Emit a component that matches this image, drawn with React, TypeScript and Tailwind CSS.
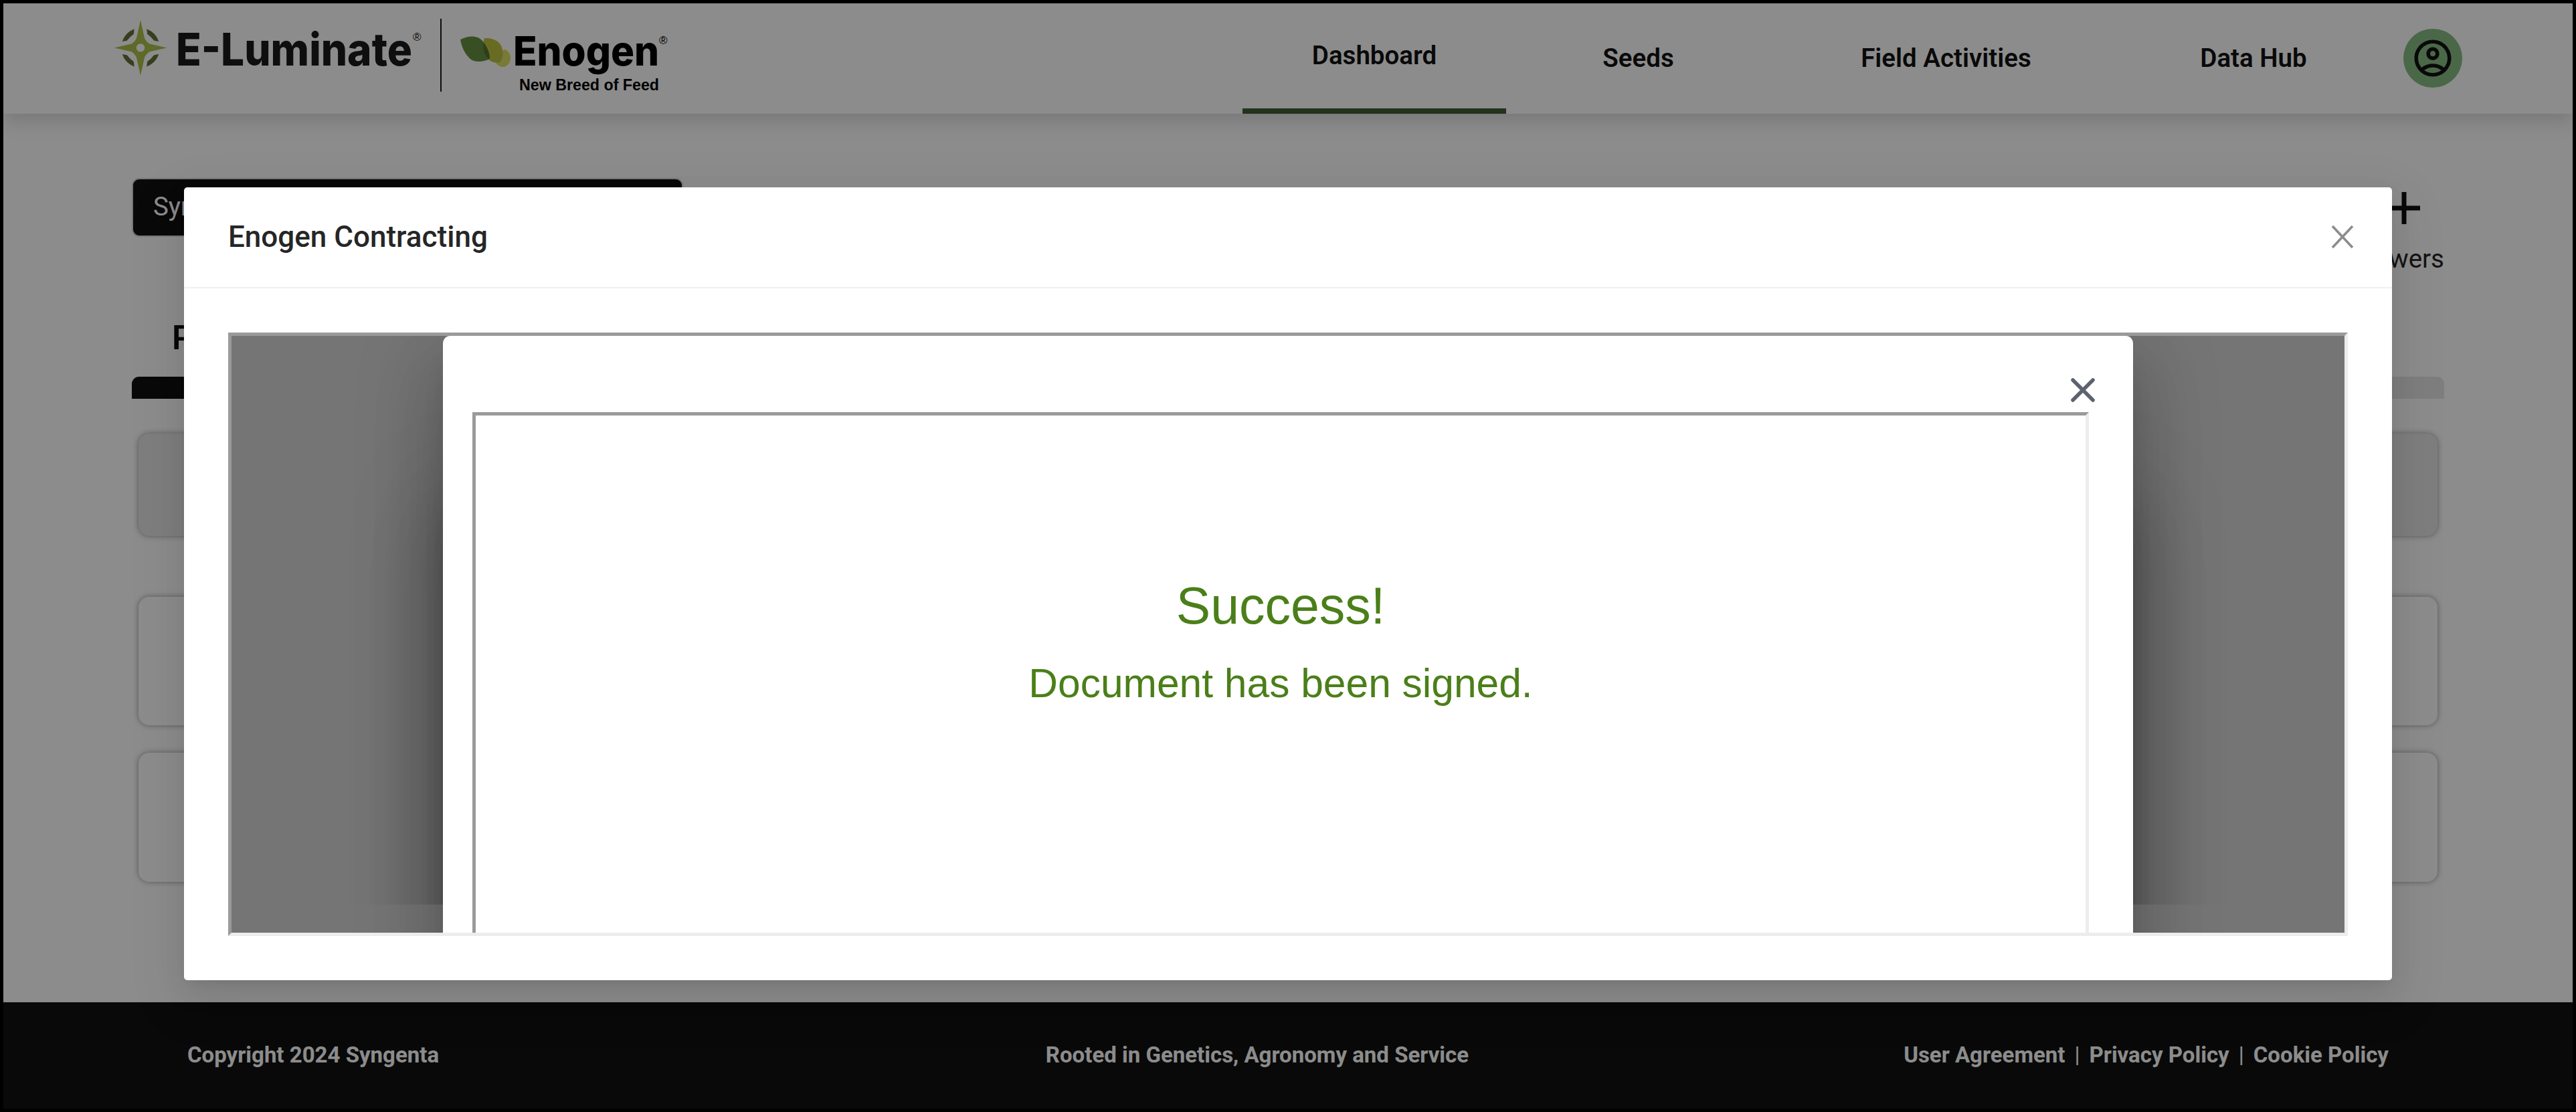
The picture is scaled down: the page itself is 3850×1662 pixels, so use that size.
import React from "react";
import { MdOutlineAccountCircle } from "react-icons/md";

interface NavItem {
  label: string;
  className: string;
}

const navItems: NavItem[] = [
  { label: "Dashboard", className: "w-[394px] border-[#3e5d33] pb-[2px]" },
  { label: "Seeds", className: "w-[395px] border-transparent pt-[6px]" },
  { label: "Field Activities", className: "w-[525px] border-transparent pt-[6px]" },
  { label: "Data Hub", className: "w-[394px] border-transparent pt-[6px]" },
];

const footerLinks = ["User Agreement", "Privacy Policy", "Cookie Policy"];

function Logo() {
  return (
    <svg viewBox="165 20 840 130" className="w-[840px] h-[130px] shrink-0">
      {/* E-Luminate star */}
      <path
        d="M210 30 L216 57 Q218 62 223.5 65.5 L249.5 71.4 L223.5 77.3 Q218 81 216 86 L210 113 L204 86 Q202 81 196.5 77.3 L170.5 71.4 L196.5 65.5 Q202 62 204 57 Z M210 65.2 a6.2 6.2 0 1 0 0.01 0 Z"
        fill="#adbf49"
        fillRule="evenodd"
      />
      <g fill="#627335">
        <path d="M200.7 43.3 L199.8 51 Q194 55 189.7 60.7 L182.7 62 Q187 49 200.7 43.3 Z" />
        <path d="M219.3 43.3 L220.2 51 Q226 55 230.3 60.7 L237.3 62 Q233 49 219.3 43.3 Z" />
        <path d="M200.7 99.7 L199.8 92 Q194 88 189.7 82.3 L182.7 81 Q187 94 200.7 99.7 Z" />
        <path d="M219.3 99.7 L220.2 92 Q226 88 230.3 82.3 L237.3 81 Q233 94 219.3 99.7 Z" />
      </g>
      <text
        x="263"
        y="98"
        fontSize="67.5"
        textLength="353"
        lengthAdjust="spacingAndGlyphs"
        fill="#1a1a1a"
        className="font-[Inter,sans-serif] font-extrabold"
      >
        E-Luminate
      </text>
      <text x="617" y="61" fontSize="17" fill="#1a1a1a" className="font-['Liberation_Sans',sans-serif]">
        ®
      </text>
      <rect x="658" y="28" width="2" height="109" fill="#1a1a1a" />

      {/* Enogen leaves */}
      <path
        d="M724 57 C738 56 750 63 751 75 C752 82 751 88 748.3 92.7 C738 96 729 90 725 83 C721 75 721.5 64 724 57 Z"
        fill="#c1c43e"
      />
      <path
        d="M688 59.3 C700 52.5 714 52.5 721 61 C728 69 731 78 732 88 C722 93 710 93 704 89 C695 82 690 70 688 59.3 Z"
        fill="#669140"
      />
      <path d="M723 64 C729 72 732 80 732 88 C726 87 721 76 723 64 Z" fill="#50742d" />
      <path
        d="M754.3 73.7 C760 76 763 81 763 86.7 C763 94 758 99 753 100 C748 100.5 744 98 741 94 C740 85 746 77 754.3 73.7 Z"
        fill="#dade62"
      />
      <path d="M751 75.5 C743 80 740 88 741 94 L748 92.7 C751 87 752 81 751 75.5 Z" fill="#bbc149" />
      <text
        x="767"
        y="98"
        fontSize="61"
        textLength="218"
        lengthAdjust="spacingAndGlyphs"
        fill="#000"
        className="font-[Inter,sans-serif] font-extrabold"
      >
        Enogen
      </text>
      <text x="985" y="66" fontSize="17" fill="#000" className="font-['Liberation_Sans',sans-serif]">
        ®
      </text>
      <text
        x="776"
        y="134.5"
        fontSize="23.5"
        textLength="209"
        lengthAdjust="spacingAndGlyphs"
        fill="#000"
        className="font-['Liberation_Sans',sans-serif] font-bold"
      >
        New Breed of Feed
      </text>
    </svg>
  );
}

function Header() {
  return (
    <header className="relative flex h-[165px] shrink-0 bg-white pl-[160px] shadow-[0_11px_28px_rgba(0,0,0,0.15)]">
      <div className="pt-[15px]">
        <Logo />
      </div>
      <nav className="ml-auto flex">
        {navItems.map((item) => (
          <a
            key={item.label}
            className={`flex items-center justify-center border-b-8 text-[38.5px] font-semibold text-[#121212] ${item.className}`}
          >
            {item.label}
          </a>
        ))}
      </nav>
      <div className="mt-[38px] mr-[165px] ml-[27px] flex size-[88px] items-center justify-center rounded-full bg-[#87bd83]">
        <MdOutlineAccountCircle className="size-[66px] text-[#121212]" />
      </div>
    </header>
  );
}

function Dashboard() {
  return (
    <main className="flex-1 px-[192px] pt-[96px]">
      <div className="flex h-[297px] justify-between">
        <div>
          <div className="flex h-[88px] w-[824px] items-center rounded-[11px] border-2 border-[#d9d9d9] bg-[#121212] pb-[2px] pl-[30px] text-[38.5px] text-white">
            Syngenta
          </div>
          <h2 className="mt-[122px] ml-[60px] text-[49.5px] font-semibold leading-[58px] text-[#121212]">
            Programs
          </h2>
        </div>
        <div className="flex flex-col items-end pt-[12px]">
          <svg viewBox="0 0 66 66" className="mr-[27px] size-[66px]">
            <path d="M33 9V57M9 33H57" stroke="#121212" strokeWidth="7" />
          </svg>
          <span className="mt-[19px] text-[38.5px] leading-[48px] text-[#262626]">Growers</span>
        </div>
      </div>
      <div className="flex h-[33px] overflow-hidden rounded-t-[11px] bg-[#e5e5e5]">
        <div className="w-1/2 bg-[#121212]" />
      </div>
      <div className="flex flex-col px-[10px] pt-[52px]">
        <div className="h-[153px] rounded-[16px] bg-[#e5e5e5] shadow-[0_0_9px_rgba(0,0,0,0.4)]" />
        <div className="mt-[91px] h-[192px] rounded-[16px] bg-white shadow-[0_0_9px_rgba(0,0,0,0.4)]" />
        <div className="mt-[41px] h-[193px] rounded-[16px] bg-white shadow-[0_0_9px_rgba(0,0,0,0.4)]" />
      </div>
    </main>
  );
}

function Footer() {
  return (
    <footer className="grid h-[159px] shrink-0 grid-cols-3 items-center bg-[#121212] px-[275px] pb-[2px] text-[33px] font-bold text-white">
      <span>Copyright 2024 Syngenta</span>
      <span className="pr-[92px] text-center">Rooted in Genetics, Agronomy and Service</span>
      <div className="flex justify-end">
        {footerLinks.map((link, i) => (
          <React.Fragment key={link}>
            {i > 0 && <span className="mx-[14px] font-normal">|</span>}
            <a>{link}</a>
          </React.Fragment>
        ))}
      </div>
    </footer>
  );
}

function SignedDocument() {
  return (
    <div className="relative mx-auto h-[1000px] w-[2526px] rounded-t-[11px] bg-white pl-[44px] shadow-[0_30px_41px_-19px_rgba(0,0,0,0.2),0_66px_104px_8px_rgba(0,0,0,0.14),0_25px_126px_22px_rgba(0,0,0,0.12)]">
      <div className="flex h-[114px] justify-end pt-[60px] pr-[54px]">
        <svg viewBox="0 0 42 42" className="size-[42px]">
          <path d="M6 6L36 36M36 6L6 36" stroke="#5c6270" strokeWidth="5.5" strokeLinecap="round" />
        </svg>
      </div>
      <div className="h-[900px] w-[2416px] border-[5px] border-t-[#9a9a9a] border-r-[#ededed] border-b-[#ededed] border-l-[#9a9a9a] pt-[240px] text-center font-['Liberation_Sans',Arial,sans-serif] text-[#4b7f19]">
        <p className="text-[77px] leading-[88px]">Success!</p>
        <p className="mt-[37px] text-[60.5px] leading-[70px]">Document has been signed.</p>
      </div>
    </div>
  );
}

function ContractModal() {
  return (
    <div className="h-[1185px] w-[3300px] rounded-[5px] bg-white shadow-[0_8px_17px_-11px_rgba(0,0,0,0.12),0_17px_44px_rgba(0,0,0,0.08),0_25px_77px_22px_rgba(0,0,0,0.05)]">
      <div className="flex h-[151px] items-center justify-between border-b-2 border-[#f0f0f0] pr-[55px] pb-[2px] pl-[66px]">
        <h1 className="text-[44px] font-medium text-[#262626]">Enogen Contracting</h1>
        <svg viewBox="0 0 38 38" className="size-[38px]">
          <path d="M4 3L34 35M34 3L4 35" stroke="#8c8c8c" strokeWidth="3.6" />
        </svg>
      </div>
      <div className="px-[66px] pt-[66px]">
        <div className="relative h-[902px] overflow-hidden border-[5px] border-t-[#9a9a9a] border-r-[#ededed] border-b-[#ededed] border-l-[#9a9a9a] bg-[#757575]">
          {/* shade cast by the dialog body, cut off where the page inside ends */}
          <div className="absolute inset-x-0 top-0 h-[850px] overflow-hidden">
            <div className="mx-auto mt-[215px] h-[1000px] w-[2526px] shadow-[0_30px_41px_-19px_rgba(0,0,0,0.2),0_66px_104px_8px_rgba(0,0,0,0.14),0_25px_126px_22px_rgba(0,0,0,0.12)]" />
          </div>
          <SignedDocument />
        </div>
      </div>
    </div>
  );
}

export default function App() {
  return (
    <div className="relative flex h-[1662px] w-[3850px] flex-col overflow-hidden border-[5px] border-black bg-white font-[Roboto,sans-serif]">
      <Header />
      <Dashboard />
      <Footer />
      <div className="absolute inset-0 flex items-start justify-center bg-black/45 pt-[275px]">
        <ContractModal />
      </div>
    </div>
  );
}
